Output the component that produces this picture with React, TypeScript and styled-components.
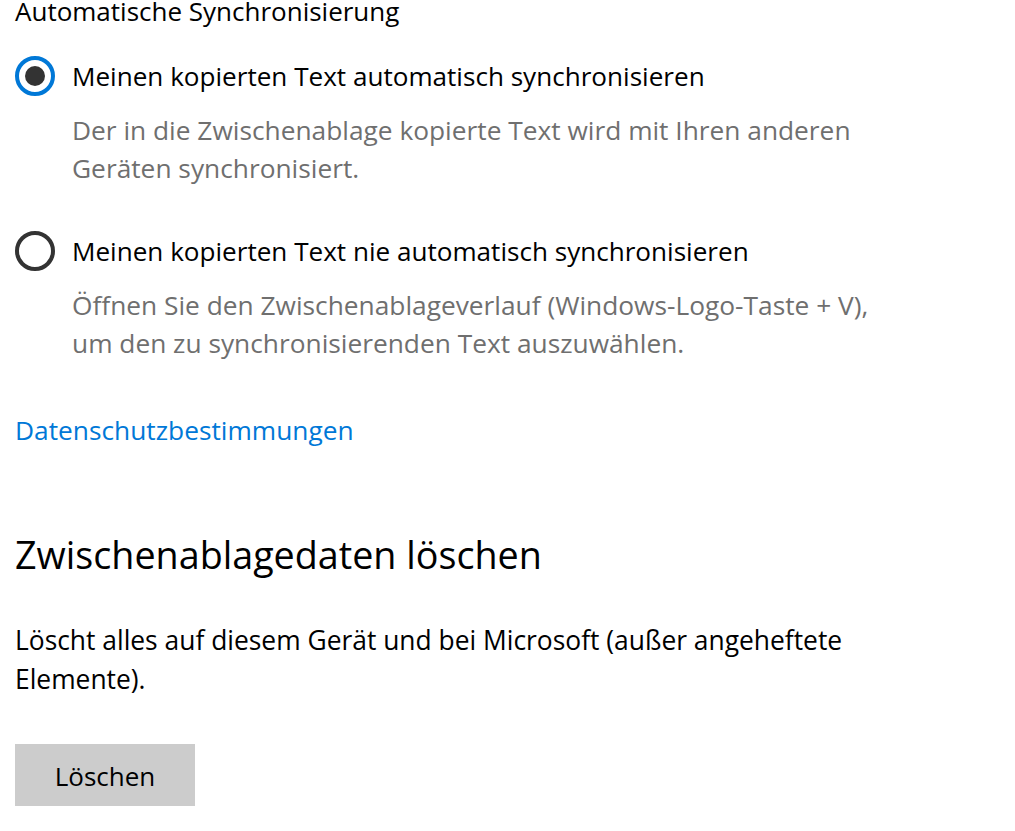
import React from "react";
import styled, { createGlobalStyle } from "styled-components";

const Global = createGlobalStyle`
  html, body { margin: 0; padding: 0; background: #ffffff; }
  body { font-family: "Open Sans", "Noto Sans", sans-serif; color: #000; overflow: hidden; }
`;

const Page = styled.div`
  width: 1015px;
  height: 831px;
  overflow: hidden;
  padding-left: 15px;
  box-sizing: border-box;
  display: flex;
  flex-direction: column;
`;

const SectionTitle = styled.div`
  font-size: 26px;
  line-height: 38px;
  margin-top: -8px;
  white-space: nowrap;
`;

const RadioRow = styled.label<{ $top: number }>`
  display: flex;
  align-items: center;
  gap: 17px;
  margin-top: ${(p) => p.$top}px;
  height: 40px;
  font-size: 26.1px;
  cursor: pointer;
  white-space: nowrap;
`;

const RadioCircle = styled.span<{ $checked?: boolean }>`
  width: 40px;
  height: 40px;
  box-sizing: border-box;
  border-radius: 50%;
  border: 4px solid ${(p) => (p.$checked ? "#0078d7" : "#333333")};
  display: flex;
  align-items: center;
  justify-content: center;
  flex-shrink: 0;
  &::after {
    content: "";
    display: ${(p) => (p.$checked ? "block" : "none")};
    width: 20px;
    height: 20px;
    border-radius: 50%;
    background: #333333;
  }
`;

const Description = styled.p`
  margin: 15px 0 0 57px;
  font-size: 26.3px;
  line-height: 38px;
  color: #6f6f6f;
  white-space: nowrap;
`;

const Link = styled.a`
  margin-top: 49px;
  font-size: 26.3px;
  line-height: 38px;
  color: #0078d7;
  text-decoration: none;
  align-self: flex-start;
`;

const Heading = styled.h2`
  margin: 80px 0 0;
  font-size: 37.7px;
  font-weight: 400;
  line-height: 52px;
`;

const Body = styled.p`
  margin: 40px 0 0;
  font-size: 26.4px;
  line-height: 39px;
  white-space: nowrap;
`;

const Button = styled.button`
  margin-top: 45px;
  align-self: flex-start;
  width: 180px;
  height: 62px;
  border: none;
  background: #cccccc;
  font-family: inherit;
  font-size: 26px;
  color: #000;
  padding: 2px 0 0;
`;

export default function App() {
  return (
    <>
      <Global />
      <Page>
        <SectionTitle>Automatische Synchronisierung</SectionTitle>
        <RadioRow $top={26}>
          <RadioCircle $checked />
          Meinen kopierten Text automatisch synchronisieren
        </RadioRow>
        <Description>
          Der in die Zwischenablage kopierte Text wird mit Ihren anderen
          <br />
          Geräten synchronisiert.
        </Description>
        <RadioRow $top={44}>
          <RadioCircle />
          Meinen kopierten Text nie automatisch synchronisieren
        </RadioRow>
        <Description>
          Öffnen Sie den Zwischenablageverlauf (Windows-Logo-Taste + V),
          <br />
          um den zu synchronisierenden Text auszuwählen.
        </Description>
        <Link href="#">Datenschutzbestimmungen</Link>
        <Heading>Zwischenablagedaten löschen</Heading>
        <Body>
          Löscht alles auf diesem Gerät und bei Microsoft (außer angeheftete
          <br />
          Elemente).
        </Body>
        <Button>Löschen</Button>
      </Page>
    </>
  );
}
